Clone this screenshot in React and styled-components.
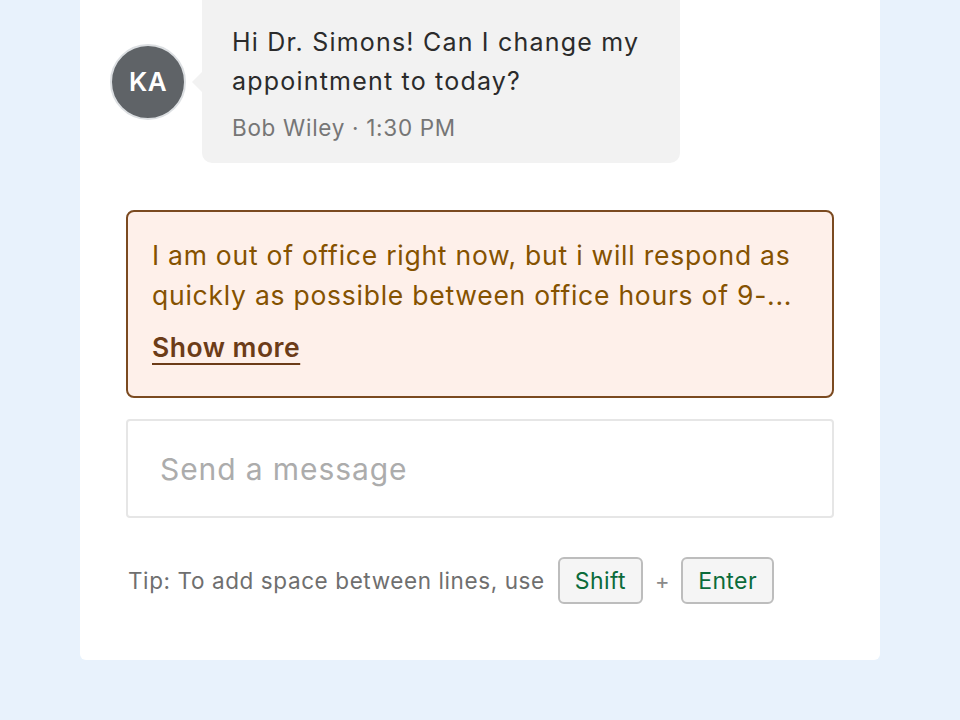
import React from "react";
import styled, { createGlobalStyle } from "styled-components";

const Global = createGlobalStyle`
  body {
    margin: 0;
    background: #e8f2fc;
    font-family: Inter, "Noto Sans", sans-serif;
  }
`;

const Page = styled.div`
  width: 960px;
  height: 720px;
  background: #e8f2fc;
`;

const Card = styled.div`
  margin: 0 80px;
  width: 800px;
  height: 660px;
  background: #ffffff;
  border-radius: 0 0 6px 6px;
  box-sizing: border-box;
  padding: 0 46px;
`;

const MessageRow = styled.div`
  display: flex;
  align-items: center;
  gap: 16px;
  margin-left: -16px;
`;

const Avatar = styled.div`
  width: 72px;
  height: 72px;
  border-radius: 50%;
  background: #5f6367;
  border: 2px solid #dcdfe2;
  color: #ffffff;
  font-size: 26px;
  font-weight: 600;
  letter-spacing: 0.5px;
  display: flex;
  align-items: center;
  justify-content: center;
  flex-shrink: 0;
`;

const Bubble = styled.div`
  position: relative;
  width: 478px;
  height: 163px;
  box-sizing: border-box;
  padding: 23px 30px 0;
  background: #f2f2f2;
  border-radius: 0 0 10px 10px;
  &::before {
    content: "";
    position: absolute;
    left: -10px;
    top: 72px;
    border-top: 10px solid transparent;
    border-bottom: 10px solid transparent;
    border-right: 10px solid #f2f2f2;
  }
`;

const BubbleText = styled.div`
  font-size: 25px;
  letter-spacing: 1.2px;
  line-height: 39px;
  color: #2b2b2b;
`;

const Meta = styled.div`
  margin-top: 12px;
  font-size: 22.5px;
  letter-spacing: 0.7px;
  line-height: 30px;
  color: #767676;
`;

const Notice = styled.div`
  margin-top: 47px;
  border: 2px solid #7b4a20;
  border-radius: 8px;
  background: #fef0ea;
  padding: 23px 24px 34px;
`;

const NoticeText = styled.div`
  font-size: 26.5px;
  letter-spacing: 0.75px;
  line-height: 40px;
  color: #855200;
`;

const ShowMore = styled.a`
  display: inline-block;
  margin-top: 17px;
  font-size: 26.5px;
  letter-spacing: 0.5px;
  line-height: 30px;
  font-weight: 600;
  color: #6c3c18;
  text-decoration: underline;
  text-underline-offset: 6px;
  text-decoration-thickness: 2px;
`;

const Input = styled.div`
  margin-top: 21px;
  height: 99px;
  box-sizing: border-box;
  border: 2px solid #e6e6e6;
  border-radius: 4px;
  padding: 0 32px;
  display: flex;
  align-items: center;
  font-size: 30px;
  letter-spacing: 0.9px;
  color: #acacac;
`;

const Tip = styled.div`
  margin-top: 39px;
  display: flex;
  align-items: center;
  font-size: 22.5px;
  letter-spacing: 0.6px;
  color: #6f6f6f;
  padding-left: 2px;
`;

const Key = styled.span`
  margin-left: ${(p) => p.$gap}px;
  height: 47px;
  box-sizing: border-box;
  padding: 0 15px;
  display: inline-flex;
  align-items: center;
  border: 2px solid #bdbdbd;
  border-radius: 6px;
  background: #f5f5f5;
  color: #0b6b3a;
  font-size: 23px;
  letter-spacing: 0.4px;
`;

const Plus = styled.span`
  margin-left: 12px;
  color: #8a8a8a;
  font-size: 22px;
`;

export default function App() {
  return (
    <Page>
      <Global />
      <Card>
        <MessageRow>
          <Avatar>KA</Avatar>
          <Bubble>
            <BubbleText>
              Hi Dr. Simons! Can I change my
              <br />
              appointment to today?
            </BubbleText>
            <Meta>Bob Wiley · 1:30 PM</Meta>
          </Bubble>
        </MessageRow>
        <Notice>
          <NoticeText>
            I am out of office right now, but i will respond as
            <br />
            quickly as possible between office hours of 9-...
          </NoticeText>
          <ShowMore>Show more</ShowMore>
        </Notice>
        <Input>Send a message</Input>
        <Tip>
          Tip: To add space between lines, use
          <Key $gap={13}>Shift</Key>
          <Plus>+</Plus>
          <Key $gap={11}>Enter</Key>
        </Tip>
      </Card>
    </Page>
  );
}
